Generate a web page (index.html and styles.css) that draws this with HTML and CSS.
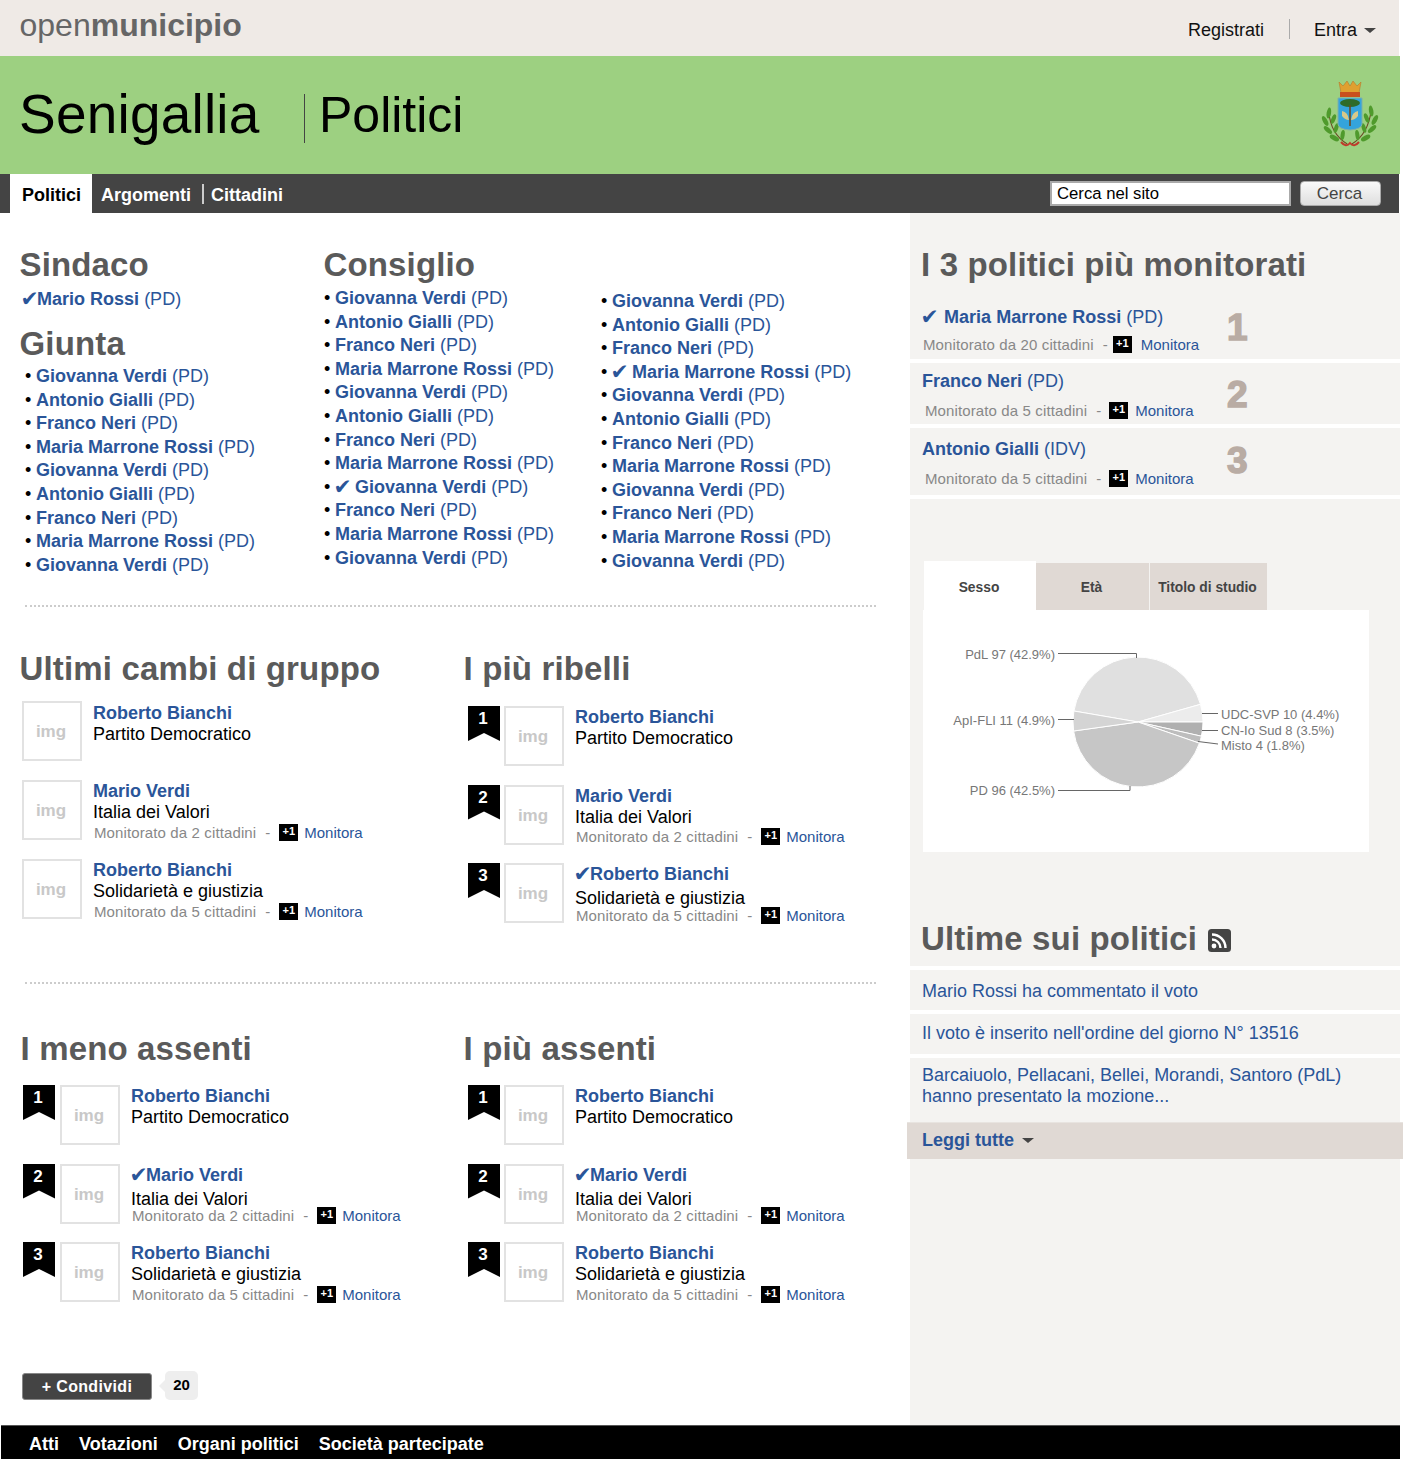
FILE: index.html
```html
<!DOCTYPE html>
<html lang="it">
<head>
  <meta charset="UTF-8" />
  <meta name="viewport" content="width=device-width, initial-scale=1.0" />
  <title>Senigallia - Politici</title>
  <link rel="stylesheet" href="styles.css">
</head>
<body>
  <div class="page">
    <div class="topbar">
      <a class="logo" href="#">open<b>municipio</b></a>
      <div class="user-links">
        <a href="#">Registrati</a>
        <span class="user-sep"></span>
        <a href="#">Entra</a>
        <span class="caret"></span>
      </div>
    </div>

    <header class="city">
      <h1>Senigallia</h1>
      <div class="city-section">Politici</div>
      <svg class="crest" viewBox="0 0 60 70" width="60" height="70">
        <g transform="translate(2.4 0) scale(.92 1)">
          <path d="M7 32 Q9 54 27 64" fill="none" stroke="#6b4a24" stroke-width="1.2"/>
          <path d="M53 30 Q50 54 32 64" fill="none" stroke="#6b4a24" stroke-width="1.2"/>
          <g fill="#4f9a2c">
            <ellipse cx="7" cy="33" rx="2.4" ry="5.5" transform="rotate(10 7 33)"/>
            <ellipse cx="3" cy="41" rx="2.4" ry="5.5" transform="rotate(-30 3 41)"/>
            <ellipse cx="12" cy="39" rx="2.2" ry="5" transform="rotate(25 12 39)"/>
            <ellipse cx="6" cy="50" rx="2.4" ry="5.5" transform="rotate(-50 6 50)"/>
            <ellipse cx="15" cy="48" rx="2.2" ry="5" transform="rotate(20 15 48)"/>
            <ellipse cx="13" cy="58" rx="2.4" ry="5.5" transform="rotate(-65 13 58)"/>
            <ellipse cx="22" cy="55" rx="2.2" ry="5" transform="rotate(10 22 55)"/>
            <ellipse cx="53" cy="31" rx="2.4" ry="5.5" transform="rotate(-10 53 31)"/>
            <ellipse cx="57" cy="40" rx="2.4" ry="5.5" transform="rotate(30 57 40)"/>
            <ellipse cx="48" cy="38" rx="2.2" ry="5" transform="rotate(-25 48 38)"/>
            <ellipse cx="54" cy="49" rx="2.4" ry="5.5" transform="rotate(50 54 49)"/>
            <ellipse cx="45" cy="48" rx="2.2" ry="5" transform="rotate(-20 45 48)"/>
            <ellipse cx="47" cy="58" rx="2.4" ry="5.5" transform="rotate(65 47 58)"/>
            <ellipse cx="38" cy="55" rx="2.2" ry="5" transform="rotate(-10 38 55)"/>
          </g>
        </g>
        <path d="M18 18 H42 V44 Q42 49 30 50 Q18 49 18 44 Z" fill="#35a4dc" stroke="#7fb0a8"/>
        <ellipse cx="30" cy="23" rx="10" ry="4" fill="#2e6b2a"/>
        <path d="M30 25 V46" stroke="#6b4a24" stroke-width="1.6"/>
        <path d="M22 31 Q28 32 29 40 Q25 40 22 36 Z M38 31 Q32 32 31 40 Q35 40 38 36 Z" fill="#d8c98a"/>
        <path d="M21 62 Q26 68 30 63 Q34 68 39 62" fill="none" stroke="#c0392b" stroke-width="2"/>
        <path d="M19 2 L23 6 L27 1 L30 6 L33 1 L37 6 L41 2 L39 13 H21 Z" fill="#e0a030" stroke="#b9772a" stroke-width=".6"/>
        <rect x="20" y="12" width="20" height="5" fill="#c8501e"/>
      </svg>
    </header>

    <nav class="mainnav">
      <div class="tabs">
        <a class="tab tab-active" href="#">Politici</a>
        <a class="tab" href="#">Argomenti</a>
        <a class="tab tab-sep" href="#">Cittadini</a>
      </div>
      <form class="search">
        <input type="text" value="Cerca nel sito" />
        <button type="button">Cerca</button>
      </form>
    </nav>

    <div class="content">
      <main class="main">
        <section class="roster">
          <div class="roster-first">
            <h2>Sindaco</h2>
            <p class="mayor"><a href="#"><span class="tick">✔</span><b>Mario Rossi</b> (PD)</a></p>
            <h2 class="giunta-title">Giunta</h2>
            <ul class="names names-giunta">
              <li><a href="#"><b>Giovanna Verdi</b> (PD)</a></li>
              <li><a href="#"><b>Antonio Gialli</b> (PD)</a></li>
              <li><a href="#"><b>Franco Neri</b> (PD)</a></li>
              <li><a href="#"><b>Maria Marrone Rossi</b> (PD)</a></li>
              <li><a href="#"><b>Giovanna Verdi</b> (PD)</a></li>
              <li><a href="#"><b>Antonio Gialli</b> (PD)</a></li>
              <li><a href="#"><b>Franco Neri</b> (PD)</a></li>
              <li><a href="#"><b>Maria Marrone Rossi</b> (PD)</a></li>
              <li><a href="#"><b>Giovanna Verdi</b> (PD)</a></li>
            </ul>
          </div>
          <div class="roster-council">
            <h2>Consiglio</h2>
            <ul class="names names-council">
              <li><a href="#"><b>Giovanna Verdi</b> (PD)</a></li>
              <li><a href="#"><b>Antonio Gialli</b> (PD)</a></li>
              <li><a href="#"><b>Franco Neri</b> (PD)</a></li>
              <li><a href="#"><b>Maria Marrone Rossi</b> (PD)</a></li>
              <li><a href="#"><b>Giovanna Verdi</b> (PD)</a></li>
              <li><a href="#"><b>Antonio Gialli</b> (PD)</a></li>
              <li><a href="#"><b>Franco Neri</b> (PD)</a></li>
              <li><a href="#"><b>Maria Marrone Rossi</b> (PD)</a></li>
              <li><a href="#"><span class="tick">✔</span> <b>Giovanna Verdi</b> (PD)</a></li>
              <li><a href="#"><b>Franco Neri</b> (PD)</a></li>
              <li><a href="#"><b>Maria Marrone Rossi</b> (PD)</a></li>
              <li><a href="#"><b>Giovanna Verdi</b> (PD)</a></li>
            </ul>
          </div>
          <ul class="names names-council2">
            <li><a href="#"><b>Giovanna Verdi</b> (PD)</a></li>
            <li><a href="#"><b>Antonio Gialli</b> (PD)</a></li>
            <li><a href="#"><b>Franco Neri</b> (PD)</a></li>
            <li><a href="#"><span class="tick">✔</span> <b>Maria Marrone Rossi</b> (PD)</a></li>
            <li><a href="#"><b>Giovanna Verdi</b> (PD)</a></li>
            <li><a href="#"><b>Antonio Gialli</b> (PD)</a></li>
            <li><a href="#"><b>Franco Neri</b> (PD)</a></li>
            <li><a href="#"><b>Maria Marrone Rossi</b> (PD)</a></li>
            <li><a href="#"><b>Giovanna Verdi</b> (PD)</a></li>
            <li><a href="#"><b>Franco Neri</b> (PD)</a></li>
            <li><a href="#"><b>Maria Marrone Rossi</b> (PD)</a></li>
            <li><a href="#"><b>Giovanna Verdi</b> (PD)</a></li>
          </ul>
        </section>

        <div class="divider"></div>

        <section class="pair">
          <div class="pair-col">
            <h2>Ultimi cambi di gruppo</h2>
            <div class="people people-plain">
              <div class="person">
                <div class="thumb">img</div>
                <div class="person-info">
                  <a class="person-name" href="#">Roberto Bianchi</a>
                  <div class="person-party">Partito Democratico</div>
                </div>
              </div>
              <div class="person">
                <div class="thumb">img</div>
                <div class="person-info">
                  <a class="person-name" href="#">Mario Verdi</a>
                  <div class="person-party">Italia dei Valori</div>
                  <div class="meta"><span>Monitorato da 2 cittadini</span><span class="dash">-</span><span class="plus">+1</span><a href="#">Monitora</a></div>
                </div>
              </div>
              <div class="person">
                <div class="thumb">img</div>
                <div class="person-info">
                  <a class="person-name" href="#">Roberto Bianchi</a>
                  <div class="person-party">Solidarietà e giustizia</div>
                  <div class="meta"><span>Monitorato da 5 cittadini</span><span class="dash">-</span><span class="plus">+1</span><a href="#">Monitora</a></div>
                </div>
              </div>
            </div>
          </div>
          <div class="pair-col">
            <h2>I più ribelli</h2>
            <div class="people">
              <div class="person">
                <div class="ribbon">1</div>
                <div class="thumb">img</div>
                <div class="person-info">
                  <a class="person-name" href="#">Roberto Bianchi</a>
                  <div class="person-party">Partito Democratico</div>
                </div>
              </div>
              <div class="person">
                <div class="ribbon">2</div>
                <div class="thumb">img</div>
                <div class="person-info">
                  <a class="person-name" href="#">Mario Verdi</a>
                  <div class="person-party">Italia dei Valori</div>
                  <div class="meta"><span>Monitorato da 2 cittadini</span><span class="dash">-</span><span class="plus">+1</span><a href="#">Monitora</a></div>
                </div>
              </div>
              <div class="person">
                <div class="ribbon">3</div>
                <div class="thumb">img</div>
                <div class="person-info">
                  <a class="person-name" href="#"><span class="tick">✔</span>Roberto Bianchi</a>
                  <div class="person-party party-checked">Solidarietà e giustizia</div>
                  <div class="meta"><span>Monitorato da 5 cittadini</span><span class="dash">-</span><span class="plus">+1</span><a href="#">Monitora</a></div>
                </div>
              </div>
            </div>
          </div>
        </section>

        <div class="divider divider-low"></div>

        <section class="pair">
          <div class="pair-col">
            <h2 class="title-shift">I meno assenti</h2>
            <div class="people people-shift">
              <div class="person">
                <div class="ribbon">1</div>
                <div class="thumb">img</div>
                <div class="person-info">
                  <a class="person-name" href="#">Roberto Bianchi</a>
                  <div class="person-party">Partito Democratico</div>
                </div>
              </div>
              <div class="person">
                <div class="ribbon">2</div>
                <div class="thumb">img</div>
                <div class="person-info">
                  <a class="person-name" href="#"><span class="tick">✔</span>Mario Verdi</a>
                  <div class="person-party party-checked">Italia dei Valori</div>
                  <div class="meta"><span>Monitorato da 2 cittadini</span><span class="dash">-</span><span class="plus">+1</span><a href="#">Monitora</a></div>
                </div>
              </div>
              <div class="person">
                <div class="ribbon">3</div>
                <div class="thumb">img</div>
                <div class="person-info">
                  <a class="person-name" href="#">Roberto Bianchi</a>
                  <div class="person-party">Solidarietà e giustizia</div>
                  <div class="meta"><span>Monitorato da 5 cittadini</span><span class="dash">-</span><span class="plus">+1</span><a href="#">Monitora</a></div>
                </div>
              </div>
            </div>
          </div>
          <div class="pair-col">
            <h2>I più assenti</h2>
            <div class="people">
              <div class="person">
                <div class="ribbon">1</div>
                <div class="thumb">img</div>
                <div class="person-info">
                  <a class="person-name" href="#">Roberto Bianchi</a>
                  <div class="person-party">Partito Democratico</div>
                </div>
              </div>
              <div class="person">
                <div class="ribbon">2</div>
                <div class="thumb">img</div>
                <div class="person-info">
                  <a class="person-name" href="#"><span class="tick">✔</span>Mario Verdi</a>
                  <div class="person-party party-checked">Italia dei Valori</div>
                  <div class="meta"><span>Monitorato da 2 cittadini</span><span class="dash">-</span><span class="plus">+1</span><a href="#">Monitora</a></div>
                </div>
              </div>
              <div class="person">
                <div class="ribbon">3</div>
                <div class="thumb">img</div>
                <div class="person-info">
                  <a class="person-name" href="#">Roberto Bianchi</a>
                  <div class="person-party">Solidarietà e giustizia</div>
                  <div class="meta"><span>Monitorato da 5 cittadini</span><span class="dash">-</span><span class="plus">+1</span><a href="#">Monitora</a></div>
                </div>
              </div>
            </div>
          </div>
        </section>

        <div class="share">
          <button class="share-btn" type="button">+ Condividi</button>
          <span class="share-count">20</span>
        </div>
      </main>

      <aside class="side">
        <h2>I 3 politici più monitorati</h2>
        <div class="top-list">
          <div class="top-row top-first">
            <div class="top-info">
              <a class="top-name" href="#"><span class="tick tick-wide">✔</span> <b>Maria Marrone Rossi</b> (PD)</a>
              <div class="meta"><span>Monitorato da 20 cittadini</span><span class="dash">-</span><span class="plus">+1</span><a class="meta-far" href="#">Monitora</a></div>
            </div>
            <div class="top-num">1</div>
          </div>
          <div class="top-row top-second">
            <div class="top-info">
              <a class="top-name" href="#"><b>Franco Neri</b> (PD)</a>
              <div class="meta"><span>Monitorato da 5 cittadini</span><span class="dash">-</span><span class="plus">+1</span><a href="#">Monitora</a></div>
            </div>
            <div class="top-num">2</div>
          </div>
          <div class="top-row top-third">
            <div class="top-info">
              <a class="top-name" href="#"><b>Antonio Gialli</b> (IDV)</a>
              <div class="meta"><span>Monitorato da 5 cittadini</span><span class="dash">-</span><span class="plus">+1</span><a href="#">Monitora</a></div>
            </div>
            <div class="top-num">3</div>
          </div>
        </div>

        <div class="chart-tabs">
          <a class="chart-tab chart-tab-active" href="#">Sesso</a>
          <a class="chart-tab chart-tab-age" href="#">Età</a>
          <a class="chart-tab chart-tab-study" href="#">Titolo di studio</a>
        </div>
        <div class="chart-panel">
          <svg class="pie" viewBox="0 0 446 242" width="446" height="242">
            <g stroke="#fff" stroke-width="1">
              <path d="M215 112 L150.9 101 A65 65 0 0 1 277.5 94.3 Z" fill="#e0e0e0"/>
              <path d="M215 112 L277.5 94.3 A65 65 0 0 1 280 112 Z" fill="#ececec"/>
              <path d="M215 112 L280 112 A65 65 0 0 1 278.4 126.2 Z" fill="#b0b0b0"/>
              <path d="M215 112 L278.4 126.2 A65 65 0 0 1 276.4 133.2 Z" fill="#bdbdbd"/>
              <path d="M215 112 L276.4 133.2 A65 65 0 0 1 150.6 121 Z" fill="#c6c6c6"/>
              <path d="M215 112 L150.6 121 A65 65 0 0 1 150.9 101 Z" fill="#d4d4d4"/>
            </g>
            <g fill="none" stroke="#666" stroke-width="1">
              <path d="M135 43.5 H213.5 V48"/>
              <path d="M135 109.5 H151"/>
              <path d="M135 180.5 H207 V176"/>
              <path d="M279 103.5 H295"/>
              <path d="M279 120.5 H295"/>
              <path d="M275 131.5 L295 134"/>
            </g>
            <g class="pie-labels">
              <text x="132" y="49" text-anchor="end">PdL 97 (42.9%)</text>
              <text x="132" y="115" text-anchor="end">ApI-FLI 11 (4.9%)</text>
              <text x="132" y="185" text-anchor="end">PD 96 (42.5%)</text>
              <text x="298" y="109">UDC-SVP 10 (4.4%)</text>
              <text x="298" y="125">CN-Io Sud 8 (3.5%)</text>
              <text x="298" y="140">Misto 4 (1.8%)</text>
            </g>
          </svg>
        </div>

        <h2 class="news-title">Ultime sui politici
          <svg class="rss" viewBox="0 0 23 23" width="23" height="23">
            <rect width="23" height="23" rx="3.5" fill="#444"/>
            <circle cx="6" cy="17" r="2.4" fill="#fff"/>
            <path d="M4 10.5 A8.5 8.5 0 0 1 12.5 19" fill="none" stroke="#fff" stroke-width="2.4"/>
            <path d="M4 5.5 A13.5 13.5 0 0 1 17.5 19" fill="none" stroke="#fff" stroke-width="2.4"/>
          </svg>
        </h2>
        <ul class="news">
          <li><a href="#">Mario Rossi ha commentato il voto</a></li>
          <li><a href="#">Il voto è inserito nell'ordine del giorno N° 13516</a></li>
          <li><a href="#">Barcaiuolo, Pellacani, Bellei, Morandi, Santoro (PdL)<br>hanno presentato la mozione...</a></li>
        </ul>
        <a class="read-all" href="#">Leggi tutte <span class="caret caret-read"></span></a>
      </aside>
    </div>

    <footer class="footer">
      <a href="#">Atti</a>
      <a href="#">Votazioni</a>
      <a href="#">Organi politici</a>
      <a href="#">Società partecipate</a>
    </footer>
  </div>
</body>
</html>
```

FILE: styles.css
```css
* {
  margin: 0;
  padding: 0;
  box-sizing: border-box;
}

body {
  background: white;
  font-family: 'Liberation Sans', Arial, 'DejaVu Sans', sans-serif;
  font-size: 18px;
  color: black;
}

a {
  color: #2a5599;
  text-decoration: none;
}

ul {
  list-style: none;
}

h2 {
  font-size: 33px;
  line-height: 38px;
  letter-spacing: .15px;
  color: #5a5a5a;
}

.tick {
  display: inline-block;
  transform: scale(1.2);
}

.tick-wide {
  margin-right: 2px;
}

.page {
  width: 1400px;
}

/* Top bar */
.topbar {
  width: 1399px;
  height: 56px;
  background: #efeae6;
  display: flex;
  justify-content: space-between;
  padding: 0 23px 0 19.5px;
}

.logo {
  font-size: 32px;
  line-height: 50px;
  color: #666;
}

.user-links {
  display: flex;
  align-items: center;
  height: 61px;
}

.user-links a {
  color: #111;
}

.user-sep {
  width: 1px;
  height: 20px;
  background: #aaa;
  margin: -3px 24px 0 25px;
}

.caret {
  display: inline-block;
  width: 0;
  height: 0;
  margin-left: 7px;
  border-left: 6px solid transparent;
  border-right: 6px solid transparent;
  border-top: 5px solid #444;
}

/* City header */
.city {
  height: 118px;
  background: #9dd081;
  display: flex;
  align-items: center;
  padding: 0 20px 0 19px;
  position: relative;
}

.city h1 {
  width: 285px;
  margin-top: -3px;
  font-size: 55px;
  font-weight: normal;
  letter-spacing: .2px;
}

.city-section {
  font-size: 50px;
  height: 49px;
  line-height: 42px;
  border-left: 1px solid #444;
  padding-left: 14px;
  margin-top: 7px;
}

.crest {
  margin-left: auto;
}

/* Main nav */
.mainnav {
  width: 1399px;
  height: 39px;
  background: #444;
  display: flex;
  justify-content: space-between;
  padding-left: 10px;
}

.tabs {
  display: flex;
}

.tab {
  color: white;
  font-weight: bold;
  line-height: 42px;
  padding: 0 9px;
}

.tab-active {
  background: white;
  color: black;
  padding: 0 11px 0 12px;
}

.tab-sep {
  position: relative;
  margin-left: 2px;
}

.tab-sep::before {
  content: "";
  position: absolute;
  left: 0;
  top: 10px;
  width: 2px;
  height: 20px;
  background: #ccc;
}

.search {
  display: flex;
  gap: 9px;
  padding: 7px 18px 0 0;
}

.search input {
  width: 241px;
  height: 25px;
  border: 2px solid #aaa;
  padding: 0 5px;
  font-family: inherit;
  font-size: 16.7px;
  color: black;
}

.search button {
  width: 81px;
  height: 25px;
  padding-right: 2px;
  border: 1px solid #aaa;
  border-radius: 4px;
  background: linear-gradient(to bottom, #fafafa, #dedede);
  font-family: inherit;
  font-size: 17px;
  color: #444;
}

/* Layout */
.content {
  display: flex;
}

.main {
  width: 910px;
  padding-top: 33px;
}

.main h2 {
  margin-left: -.5px;
}

.side {
  width: 490px;
  background: #f4f3f1;
  padding-top: 33px;
}

/* Roster */
.roster {
  display: flex;
  padding-left: 20px;
  height: 359px;
}

.roster-first {
  width: 304px;
}

.roster-council {
  width: 277px;
}

.mayor {
  line-height: 24px;
  margin-top: 3px;
  padding-left: 2px;
}

.giunta-title {
  margin-top: 14px;
}

.names li {
  line-height: 23.6px;
  white-space: nowrap;
}

.names li::before {
  content: "•";
  display: inline-block;
  width: 11px;
}

.names-giunta {
  margin-top: 2px;
  padding-left: 5px;
}

.names-council {
  margin-top: 3px;
}

.names-council2 {
  margin-top: 44px;
}

.divider {
  width: 851px;
  margin-left: 25px;
  border-top: 2px dotted #ccc;
}

.divider-low {
  margin-top: 59px;
}

/* Person columns */
.pair {
  display: flex;
  padding: 43px 0 0 20px;
}

.divider-low + .pair {
  padding-top: 46px;
}

.divider-low + .pair .people {
  margin-top: 17px;
}

.pair-col {
  width: 444px;
}

.main .title-shift {
  margin-left: .5px;
}

.people {
  margin-top: 18px;
  padding-left: 4px;
  display: flex;
  flex-direction: column;
  gap: 18.5px;
}

.people-plain {
  margin-top: 13px;
  padding-left: 2px;
  gap: 19px;
}

.people-plain .person:first-child .person-info {
  padding-top: 1px;
}

.people-shift {
  padding-left: 3px;
}

.person {
  display: flex;
  height: 60px;
}

.ribbon {
  width: 32px;
  height: 35px;
  margin-right: 4px;
  padding-right: 2px;
  background: black;
  color: white;
  font-weight: bold;
  font-size: 17px;
  line-height: 26px;
  text-align: center;
  clip-path: polygon(0 0, 100% 0, 100% 100%, 50% 77%, 0 100%);
}

.people-shift .ribbon {
  margin-right: 5px;
}

.thumb {
  width: 60px;
  height: 60px;
  padding-right: 2px;
  border: 2px solid #e2e2e2;
  color: #c8c8c8;
  font-size: 17px;
  font-weight: bold;
  line-height: 58px;
  text-align: center;
}

.person-info {
  margin-left: 11px;
}

.person-name {
  display: block;
  font-weight: bold;
  line-height: 22px;
  white-space: nowrap;
}

.person-party {
  line-height: 20px;
}

.party-checked {
  margin-top: 3px;
  margin-bottom: -3px;
}

.meta {
  display: flex;
  align-items: center;
  height: 20px;
  margin-left: 1px;
  font-size: 15px;
  color: #888;
  white-space: nowrap;
}

.meta span:first-child {
  letter-spacing: .12px;
}

.dash {
  margin: 0 9px;
}

.plus {
  width: 19px;
  height: 17px;
  margin-right: 6px;
  background: black;
  color: white;
  font-size: 11px;
  font-weight: bold;
  line-height: 15px;
  text-align: center;
}

/* Share */
.share {
  display: flex;
  padding: 69px 0 25px 22px;
}

.share-btn {
  width: 130px;
  height: 27px;
  margin-top: 2px;
  background: #444;
  border: 1px solid #888;
  border-radius: 3px;
  color: white;
  font-family: inherit;
  font-size: 16px;
  font-weight: bold;
  letter-spacing: .35px;
}

.share-count {
  position: relative;
  width: 33px;
  height: 29px;
  margin-left: 13px;
  background: #eee;
  border-radius: 5px;
  font-size: 15px;
  font-weight: bold;
  line-height: 27px;
  text-align: center;
}

.share-count::before {
  content: "";
  position: absolute;
  left: -6px;
  top: 9px;
  border-top: 6px solid transparent;
  border-bottom: 6px solid transparent;
  border-right: 6px solid #eee;
}

/* Sidebar */
.side h2 {
  padding-left: 11px;
  white-space: nowrap;
}

.top-list {
  margin-top: 16px;
}

.top-row {
  display: flex;
  align-items: center;
  padding-left: 12px;
  border-bottom: 4px solid white;
}

.top-first {
  padding-top: 6px;
  padding-bottom: 5px;
}

.top-second {
  padding-top: 7px;
  padding-bottom: 4px;
}

.top-third {
  padding-top: 10px;
  padding-bottom: 7px;
}

.top-info {
  width: 305px;
}

.top-name {
  display: block;
  line-height: 22px;
  margin-bottom: 8px;
}

.top-first .top-name {
  margin-bottom: 6px;
}

.top-first .dash {
  margin-right: 5px;
}

.top-second .dash,
.top-third .dash {
  margin-right: 8px;
}

.top-second .plus,
.top-third .plus {
  margin-right: 7px;
}

.top-second .meta,
.top-third .meta {
  margin-left: 3px;
}

.meta-far {
  margin-left: 3px;
}

.top-num {
  margin-bottom: 5px;
  font-size: 37px;
  font-weight: bold;
  color: #b9aca4;
  -webkit-text-stroke: 1.5px #b9aca4;
  line-height: 40px;
}

.top-second .top-num {
  margin-bottom: 1px;
}

/* Chart */
.chart-tabs {
  display: flex;
  align-items: flex-end;
  height: 49px;
  margin: 62px 0 0 14px;
}

.chart-tab {
  height: 47px;
  padding-right: 2px;
  background: #e0d9d4;
  color: #444;
  font-size: 13.8px;
  font-weight: bold;
  line-height: 50px;
  text-align: center;
}

.chart-tab-active {
  width: 112px;
  height: 49px;
  background: white;
  line-height: 54px;
}

.chart-tab-age {
  width: 113px;
}

.chart-tab-study {
  width: 117px;
  margin-left: 1px;
}

.chart-panel {
  width: 446px;
  height: 242px;
  margin-left: 13px;
  background: white;
}

.pie {
  display: block;
}

.pie-labels {
  font-size: 13px;
  fill: #777;
}

/* News */
.side .news-title {
  margin-top: 68px;
}

.rss {
  vertical-align: -2px;
  margin-left: 2px;
}

.news {
  margin-top: 8px;
}

.news li {
  border-top: 4px solid white;
  padding: 11px 12px 8px;
  line-height: 21px;
}

.news li:nth-child(2) {
  padding: 9px 12px 10px;
}

.news li:nth-child(3) {
  padding: 7px 12px 15px;
}

.read-all {
  display: block;
  width: 496px;
  height: 37px;
  margin-left: -3px;
  padding-left: 15px;
  background: #e0d9d4;
  border-top: 1px solid #e8e4e0;
  font-weight: bold;
  line-height: 34px;
}

.caret-read {
  margin-left: 3px;
  vertical-align: 3px;
}

/* Footer */
.footer {
  display: flex;
  gap: 20px;
  height: 34px;
  margin-left: 1px;
  padding-left: 28px;
  background: black;
  border-top: 1px solid #555;
}

.footer a {
  color: white;
  font-weight: bold;
  line-height: 36px;
}
```
